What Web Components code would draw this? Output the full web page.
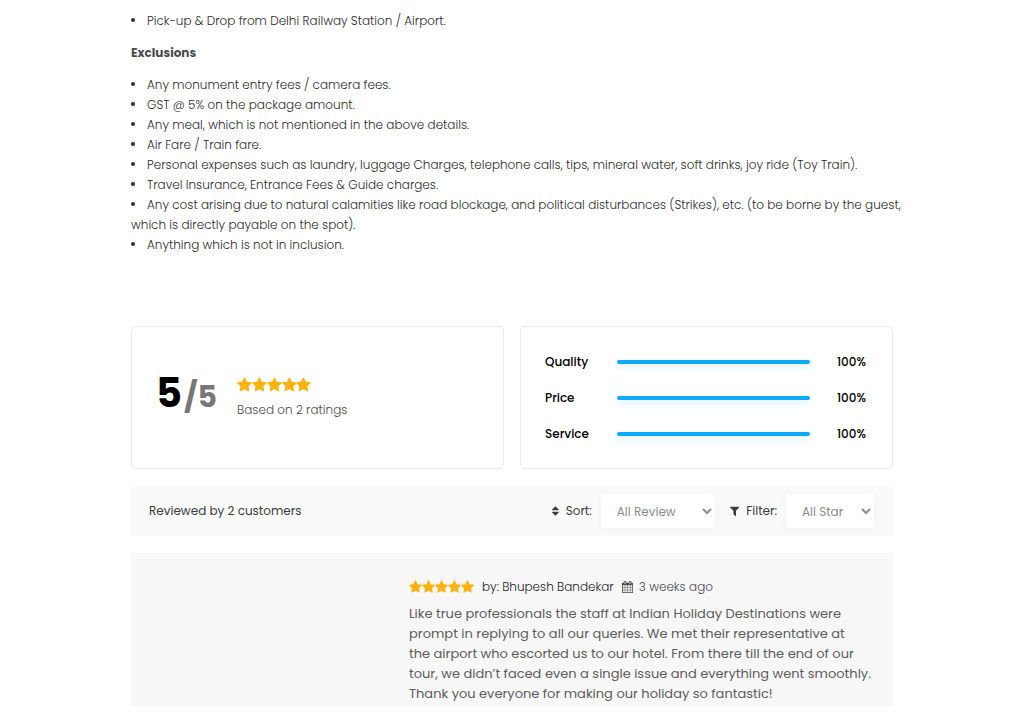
<!DOCTYPE html>
<html lang="en">
<head>
<meta charset="utf-8">
<meta name="viewport" content="width=device-width, initial-scale=1">
<title>Package details and reviews</title>
<style>
  body { margin: 0; background: #fff; color: #2c2c2c; font: 300 12px/20px Poppins, Inter, sans-serif; }
</style>
</head>
<body>
<tour-page>
  <tour-list><tour-item>Pick-up &amp; Drop from Delhi Railway Station / Airport.</tour-item></tour-list>
  <tour-heading>Exclusions</tour-heading>
  <tour-list>
    <tour-item>Any monument entry fees / camera fees.</tour-item>
    <tour-item>GST @ 5% on the package amount.</tour-item>
    <tour-item>Any meal, which is not mentioned in the above details.</tour-item>
    <tour-item>Air Fare / Train fare.</tour-item>
    <tour-item>Personal expenses such as laundry, luggage Charges, telephone calls, tips, mineral water, soft drinks, joy ride (Toy Train).</tour-item>
    <tour-item>Travel Insurance, Entrance Fees &amp; Guide charges.</tour-item>
    <tour-item>Any cost arising due to natural calamities like road blockage, and political disturbances (Strikes), etc. (to be borne by the guest, which is directly payable on the spot).</tour-item>
    <tour-item>Anything which is not in inclusion.</tour-item>
  </tour-list>
  <review-panel slot="reviews">
    <rating-score slot="summary" value="5" max="5">Based on 2 ratings</rating-score>
    <rating-bars slot="summary">
      <rating-bar value="100">Quality</rating-bar>
      <rating-bar value="100">Price</rating-bar>
      <rating-bar value="100">Service</rating-bar>
    </rating-bars>
    <review-toolbar>Reviewed by 2 customers</review-toolbar>
    <review-card>
      <span slot="author">by: Bhupesh Bandekar</span>
      <span slot="date">3 weeks ago</span>
      Like true professionals the staff at Indian Holiday Destinations were prompt in replying to all our queries. We met their representative at<br>
      the airport who escorted us to our hotel. From there till the end of our tour, we didn’t faced even a single issue and everything went smoothly. Thank you everyone for making our holiday so fantastic!
    </review-card>
  </review-panel>
</tour-page>

<script>
const define = (name, markup, setup) => {
  const template = document.createElement('template');
  template.innerHTML = markup;
  customElements.define(name, class extends HTMLElement {
    connectedCallback() {
      if (this.shadowRoot) return;
      this.attachShadow({ mode: 'open' }).append(template.content.cloneNode(true));
      if (setup) setup(this, this.shadowRoot);
    }
  });
};

const glyphs = {
  star: ['0 0 1664 1792', 'M1664 647q0 22-26 48l-363 354 86 500q1 7 1 20 0 21-10.5 35.5t-30.5 14.5q-19 0-40-12l-449-236-449 236q-22 12-40 12-21 0-31.5-14.5t-10.5-35.5q0-6 2-20l86-500-364-354q-25-27-25-48 0-37 56-46l502-73 225-455q19-41 49-41t49 41l225 455 502 73q56 9 56 46z'],
  sort: ['384 0 1024 1792', 'M1408 1088q0 26-19 45l-448 448q-19 19-45 19t-45-19l-448-448q-19-19-19-45t19-45 45-19h896q26 0 45 19t19 45zm0-384q0 26-19 45t-45 19h-896q-26 0-45-19t-19-45 19-45l448-448q19-19 45-19t45 19l448 448q19 19 19 45z'],
  filter: ['192 0 1408 1792', 'M1595 295q17 41-14 70l-493 493v742q0 42-39 59-13 5-25 5-27 0-45-19l-256-256q-19-19-19-45v-486l-493-493q-31-29-14-70 17-39 59-39h1280q42 0 59 39z'],
  calendar: ['64 0 1664 1792', 'M192 1664h288v-288h-288v288zm352 0h320v-288h-320v288zm-352-352h288v-320h-288v320zm352 0h320v-320h-320v320zm-352-384h288v-288h-288v288zm736 736h320v-288h-320v288zm-384-736h320v-288h-320v288zm768 736h288v-288h-288v288zm-384-352h320v-320h-320v320zm-352-864v-288q0-13-9.5-22.5t-22.5-9.5h-64q-13 0-22.5 9.5t-9.5 22.5v288q0 13 9.5 22.5t22.5 9.5h64q13 0 22.5-9.5t9.5-22.5zm736 864h288v-320h-288v320zm-384-384h320v-288h-320v288zm384 0h288v-288h-288v288zm32-480v-288q0-13-9.5-22.5t-22.5-9.5h-64q-13 0-22.5 9.5t-9.5 22.5v288q0 13 9.5 22.5t22.5 9.5h64q13 0 22.5-9.5t9.5-22.5zm384-64v1280q0 52-38 90t-90 38h-1408q-52 0-90-38t-38-90v-1280q0-52 38-90t90-38h128v-96q0-66 47-113t113-47h64q66 0 113 47t47 113v96h384v-96q0-66 47-113t113-47h64q66 0 113 47t47 113v96h128q52 0 90 38t38 90z']
};

define('ui-icon', `
  <style>
    :host { display: inline-flex; flex: none; }
    svg { display: block; height: var(--icon-size, 12px); fill: currentColor; }
  </style>
  <svg aria-hidden="true"><path/></svg>`, (host, root) => {
  const [box, path] = glyphs[host.getAttribute('name')];
  root.querySelector('svg').setAttribute('viewBox', box);
  root.querySelector('path').setAttribute('d', path);
});

define('star-rating', `
  <style>:host { display: flex; flex: none; color: #ffb20e; }</style>
  ${'<ui-icon name="star"></ui-icon>'.repeat(5)}`);

define('tour-page', `
  <style>
    :host { display: block; box-sizing: border-box; max-width: 794px; margin: 0 auto; padding: 11px 0 17px 16px; }
    .reviews { margin-top: 71px; margin-right: 16px; }
  </style>
  <slot></slot>
  <div class="reviews"><slot name="reviews"></slot></div>`);

define('tour-heading', `
  <style>
    :host { display: block; margin: 12px 0; color: #4b4b4b; }
    h2 { margin: 0; font-size: 12px; font-weight: 700; }
  </style>
  <h2><slot></slot></h2>`);

define('tour-list', `
  <style>:host { display: block; }</style>
  <div role="list"><slot></slot></div>`);

define('tour-item', `
  <style>
    :host { display: block; }
    .dot { display: inline-block; width: 4px; height: 4px; margin-right: 12px; border-radius: 50%; background: currentColor; vertical-align: 3px; }
  </style>
  <div role="listitem"><span class="dot"></span><slot></slot></div>`);

define('review-panel', `
  <style>
    :host { display: grid; gap: 17px; }
    .summary { display: grid; grid-template-columns: 1fr 1fr; gap: 16px; }
  </style>
  <div class="summary"><slot name="summary"></slot></div>
  <slot></slot>`);

define('rating-score', `
  <style>
    :host { display: flex; align-items: center; gap: 20px; box-sizing: border-box; min-height: 143px; padding: 0 24px; border: 1px solid #ebebeb; border-radius: 5px; color: #4b4b4b; }
    .score { display: flex; align-items: baseline; gap: 2px; padding-bottom: 6px; font-size: 30px; line-height: 44px; font-weight: 700; color: #777; }
    strong { font-size: 40px; font-weight: 700; color: #000; }
    .detail { display: grid; gap: 7px; padding-top: 2px; --icon-size: 16px; }
  </style>
  <div class="score"><strong></strong><span></span></div>
  <div class="detail"><star-rating></star-rating><div><slot></slot></div></div>`, (host, root) => {
  root.querySelector('strong').textContent = host.getAttribute('value');
  root.querySelector('span').textContent = '/' + host.getAttribute('max');
});

define('rating-bars', `
  <style>
    :host { display: flex; flex-direction: column; justify-content: center; gap: 16px; box-sizing: border-box; min-height: 143px; padding: 0 26px 0 24px; border: 1px solid #ebebeb; border-radius: 5px; color: #000; font-weight: 500; }
  </style>
  <slot></slot>`);

define('rating-bar', `
  <style>
    :host { display: grid; grid-template-columns: 72px 1fr 56px; align-items: center; }
    .track { height: 4px; border-radius: 2px; box-shadow: 0 4px 7px #d9f2ff; }
    .fill { height: 100%; border-radius: 2px; background: #0caaf8; }
    .value { text-align: right; }
  </style>
  <span><slot></slot></span>
  <div class="track"><div class="fill"></div></div>
  <span class="value"></span>`, (host, root) => {
  const value = host.getAttribute('value') + '%';
  root.querySelector('.fill').style.width = value;
  root.querySelector('.value').textContent = value;
});

define('review-toolbar', `
  <style>
    :host { display: flex; align-items: center; box-sizing: border-box; min-height: 50px; padding: 0 19px 0 18px; border-radius: 3px; background: #fafafa; color: #3c3c3c; font-weight: 400; }
    .title { margin-right: auto; }
    label { display: flex; align-items: center; gap: 7px; margin-right: 9px; }
    select { height: 34px; padding: 0 0 0 12px; border: 0; border-radius: 3px; background: #fff; color: #8c8c8c; font: inherit; box-shadow: 0 2px 6px #f0f0f0; }
    #sort { width: 114px; margin-right: 15px; }
    #filter { width: 88px; }
  </style>
  <span class="title"><slot></slot></span>
  <label for="sort"><ui-icon name="sort"></ui-icon>Sort:</label>
  <select id="sort"><option>All Review</option></select>
  <label for="filter"><ui-icon name="filter"></ui-icon>Filter:</label>
  <select id="filter"><option>All Star</option></select>`);

define('review-card', `
  <style>
    :host { display: grid; grid-template-columns: 262px 1fr; box-sizing: border-box; padding: 24px 16px 2px; background: #f7f7f7; color: #5c5c5c; }
    article { grid-column: 2; }
    header { display: flex; align-items: center; gap: 8px; --icon-size: 14px; }
    .author { color: #1c1c1c; }
    .date { display: flex; align-items: center; gap: 6px; color: #4b4b4b; --icon-size: 12px; }
    p { margin: 7px 0 0; font-size: 13px; font-weight: 400; }
  </style>
  <article>
    <header>
      <star-rating></star-rating>
      <span class="author"><slot name="author"></slot></span>
      <span class="date"><ui-icon name="calendar"></ui-icon><slot name="date"></slot></span>
    </header>
    <p><slot></slot></p>
  </article>`);
</script>
</body>
</html>
